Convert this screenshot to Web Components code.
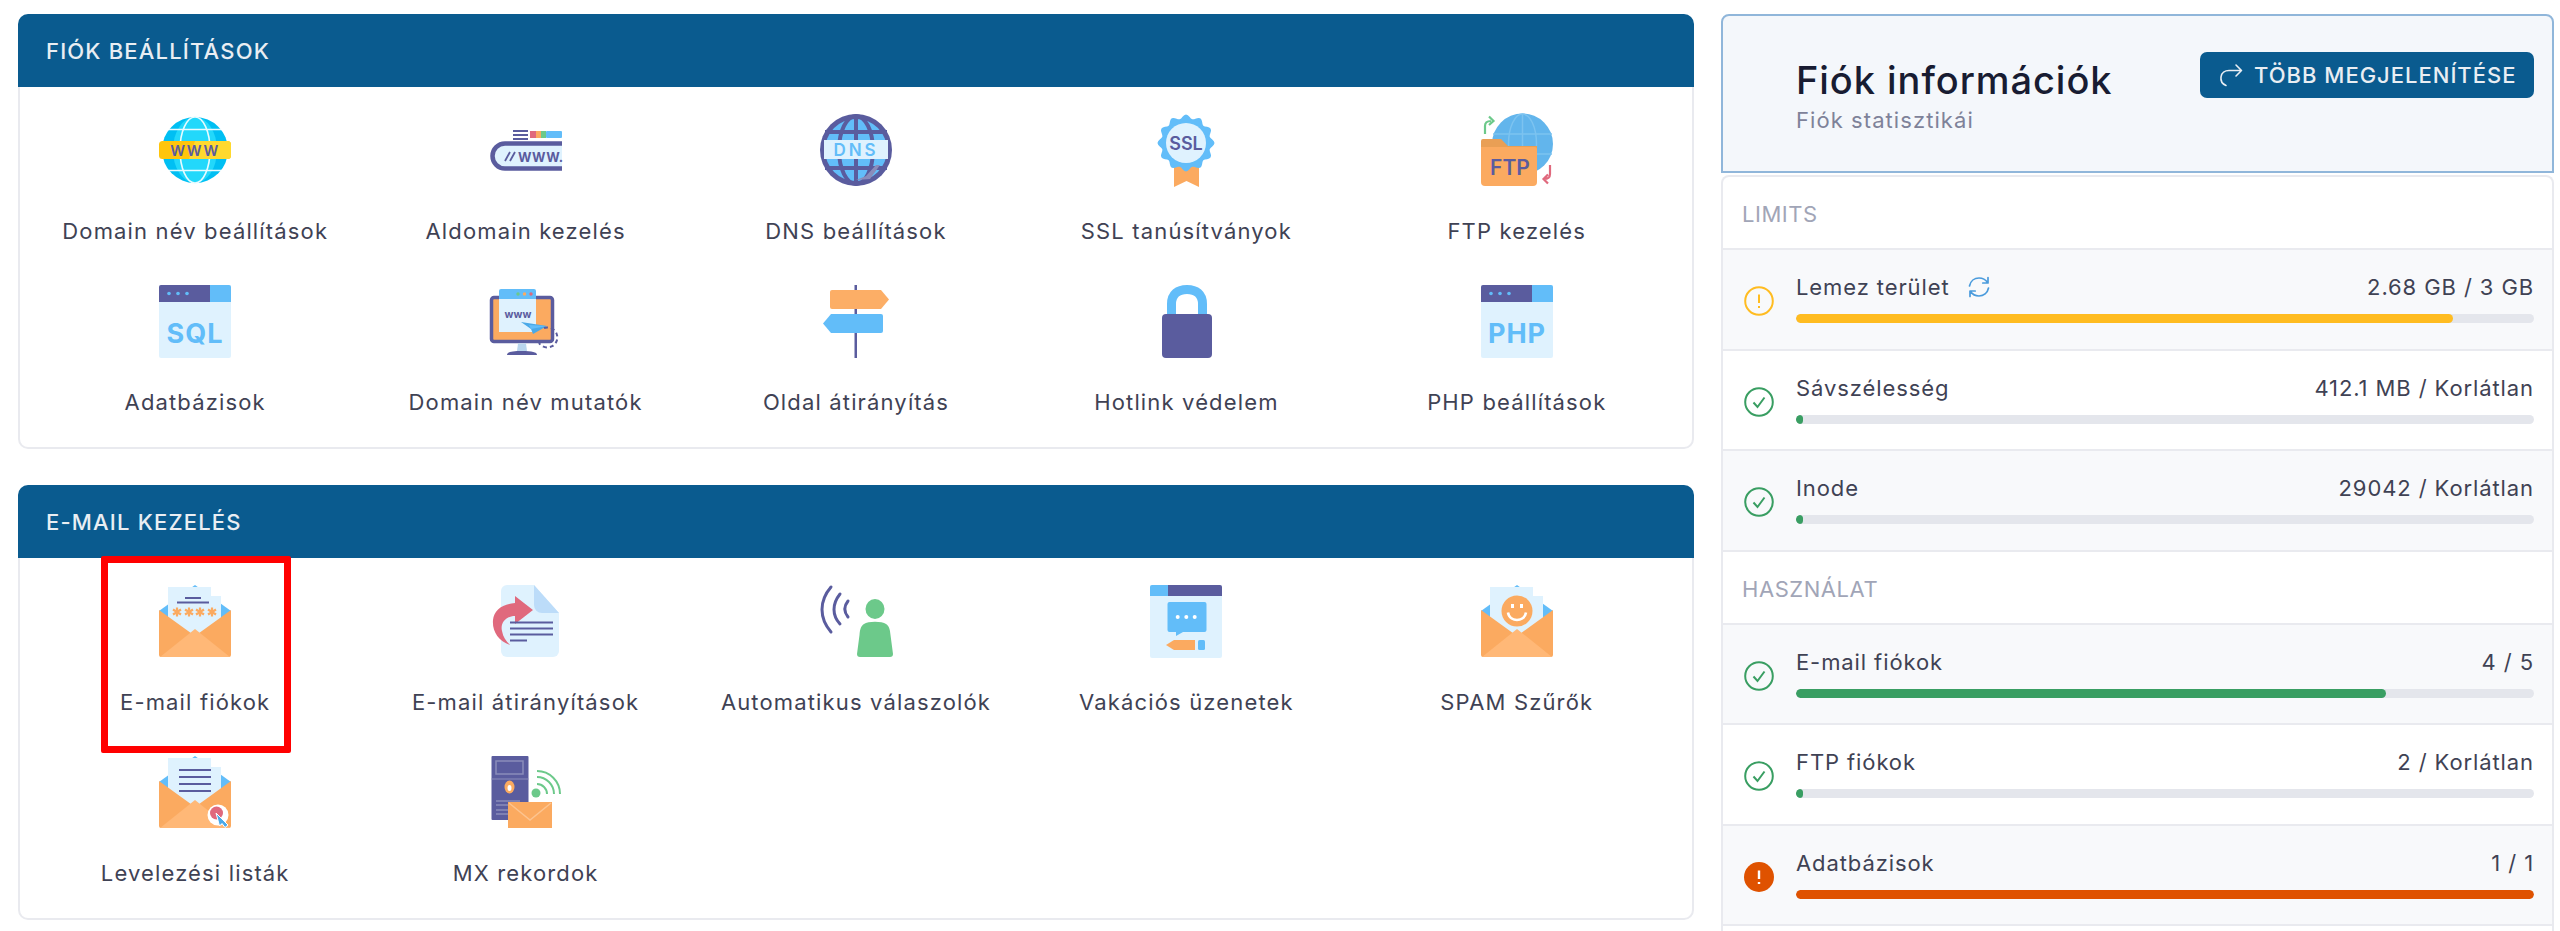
<!DOCTYPE html>
<html lang="hu">
  <head>
    <meta charset="utf-8" />
    <style>
      html, body { margin: 0; height: 931px; overflow: hidden; background: #fff; }
      body { font-family: Inter, "Liberation Sans", sans-serif; color: #3f4254; }
    </style>
    <template id="page-tmpl">
      <style>
        :host { display: grid; grid-template-columns: 1676px 833px; column-gap: 27px; padding: 14px 6px 0 18px; align-items: start; }
        .left { display: flex; flex-direction: column; gap: 36px; }
      </style>
      <div class="left"><slot name="left"></slot></div>
      <div><slot name="right"></slot></div>
    </template>
    <template id="card-tmpl">
      <style>
        :host { display: block; }
        header { height: 73px; box-sizing: border-box; background: #0a5b8f; border-radius: 10px 10px 0 0; color: #e9eef3; font-size: 22px; font-weight: 500; letter-spacing: 1.18px; line-height: 74px; padding-left: 28px; text-transform: uppercase; }
        .body { display: grid; grid-template-columns: repeat(5, 1fr); padding: 0 10px 18px; border: 2px solid #e9eaef; border-top: 0; border-radius: 0 0 10px 10px; }
      </style>
      <header id="title"></header>
      <div class="body"><slot></slot></div>
    </template>
    <template id="tile-tmpl">
      <style>
        :host { display: flex; flex-direction: column; align-items: center; position: relative; padding: 27px 0 12px; }
        svg { display: block; width: 72px; height: 72px; overflow: visible; font-family: Inter, "Liberation Sans", sans-serif; }
        .label { margin-top: 30px; font-size: 22px; line-height: 30px; letter-spacing: 1.15px; color: #3f4254; white-space: nowrap; }
        .mark { display: none; position: absolute; left: 71px; top: -2px; width: 190px; height: 197px; box-sizing: border-box; border: 7px solid #ff0000; border-radius: 2px; }
        :host([marked]) .mark { display: block; }
      </style>
      <div id="icon"></div>
      <div class="label"><slot></slot></div>
      <div class="mark"></div>
    </template>
    <template id="info-tmpl">
      <style>
        :host { display: flex; justify-content: space-between; align-items: flex-start; box-sizing: border-box; height: 159px; background: #f4f7fb; border: 2px solid #90b6da; border-radius: 8px 8px 0 0; padding: 36px 18px 0 73px; }
        h2 { margin: 0; font-size: 38px; line-height: 56px; font-weight: 500; color: #181c32; letter-spacing: .95px; }
        p { margin: -3px 0 0; font-size: 22px; line-height: 30px; letter-spacing: 1.07px; color: #7e8299; }
        button { display: flex; align-items: center; gap: 11px; width: 334px; height: 46px; box-sizing: border-box; padding: 0 0 0 19px; border: 0; border-radius: 7px; background: #0a5b8f; color: #e9eef3; font: 500 22px Inter, "Liberation Sans", sans-serif; letter-spacing: 1px; white-space: nowrap; }
        svg { width: 24px; height: 24px; flex: none; }
      </style>
      <div>
        <h2><slot name="title"></slot></h2>
        <p><slot name="sub"></slot></p>
      </div>
      <button>
        <svg viewBox="0 0 24 24" fill="none" stroke="#e9eef3" stroke-width="1.6" stroke-linecap="round" stroke-linejoin="round"><path d="M7 22.500C3.500 21 1.500 17.500 2 14 2.500 10 6 7.500 10 7.500H22.500M17 2L22.500 7.500 17 13"/></svg>
        <slot name="action"></slot>
      </button>
    </template>
    <template id="list-tmpl">
      <style>
        :host { display: block; margin-top: 2px; border: 2px solid #e9eaef; border-bottom: 0; border-radius: 8px 8px 0 0; padding-bottom: 8px; }
      </style>
      <slot></slot>
    </template>
    <template id="heading-tmpl">
      <style>
        :host { display: block; height: 71px; box-sizing: content-box; border-bottom: 2px solid #e9eaef; color: #a1a5b7; font-size: 22px; line-height: 74px; letter-spacing: .55px; padding-left: 19px; }
      </style>
      <slot></slot>
    </template>
    <template id="stat-tmpl">
      <style>
        :host { display: grid; grid-template-columns: 73px 1fr; box-sizing: border-box; height: 100.5px; border-bottom: 2px solid #e9eaef; padding: 23px 18px 0 0; }
        :host([shade]) { background: #f8f9fb; }
        .status { display: flex; justify-content: center; padding: 13px 2px 0 0; }
        .status svg { display: block; width: 30px; height: 30px; }
        .line { display: flex; justify-content: space-between; font-size: 22px; line-height: 28px; letter-spacing: .9px; color: #3f4254; white-space: nowrap; }
        .bar { height: 9px; margin-top: 13px; border-radius: 5px; background: #e4e6ec; overflow: hidden; }
        .fill { height: 100%; border-radius: 5px; }
      </style>
      <div class="status" id="status"></div>
      <div>
        <div class="line"><span><slot></slot></span><span id="value"></span></div>
        <div class="bar"><div class="fill" id="fill"></div></div>
      </div>
    </template>
  </head>
  <body>
    <dash-page>
      <panel-card slot="left" title="Fiók beállítások">
        <tile-item icon="globe">Domain név beállítások</tile-item>
        <tile-item icon="subdomain">Aldomain kezelés</tile-item>
        <tile-item icon="dns">DNS beállítások</tile-item>
        <tile-item icon="ssl">SSL tanúsítványok</tile-item>
        <tile-item icon="ftp">FTP kezelés</tile-item>
        <tile-item icon="sql">Adatbázisok</tile-item>
        <tile-item icon="pointer">Domain név mutatók</tile-item>
        <tile-item icon="sign">Oldal átirányítás</tile-item>
        <tile-item icon="lock">Hotlink védelem</tile-item>
        <tile-item icon="php">PHP beállítások</tile-item>
      </panel-card>
      <panel-card slot="left" title="E-mail kezelés">
        <tile-item icon="mailacc" marked>E-mail fiókok</tile-item>
        <tile-item icon="forward">E-mail átirányítások</tile-item>
        <tile-item icon="auto">Automatikus válaszolók</tile-item>
        <tile-item icon="vacation">Vakációs üzenetek</tile-item>
        <tile-item icon="spam">SPAM Szűrők</tile-item>
        <tile-item icon="lists">Levelezési listák</tile-item>
        <tile-item icon="mx">MX rekordok</tile-item>
      </panel-card>
      <div slot="right">
        <info-header>
          <span slot="title">Fiók információk</span>
          <span slot="sub">Fiók statisztikái</span>
          <span slot="action">TÖBB MEGJELENÍTÉSE</span>
        </info-header>
        <stat-list>
          <stat-heading>LIMITS</stat-heading>
          <stat-row status="warn" pct="89" value="2.68 GB / 3 GB" shade>Lemez terület <refresh-icon></refresh-icon></stat-row>
          <stat-row status="ok" pct="1" value="412.1 MB / Korlátlan">Sávszélesség</stat-row>
          <stat-row status="ok" pct="1" value="29042 / Korlátlan" shade>Inode</stat-row>
          <stat-heading>HASZNÁLAT</stat-heading>
          <stat-row status="ok" pct="80" value="4 / 5" shade>E-mail fiókok</stat-row>
          <stat-row status="ok" pct="1" value="2 / Korlátlan">FTP fiókok</stat-row>
          <stat-row status="full" pct="100" value="1 / 1" shade>Adatbázisok</stat-row>
        </stat-list>
      </div>
    </dash-page>

    <script type="text/javascript">
      const NAVY = '#5a5c9e', BLUE = '#62bdf9', PALE = '#dff2fe', ORANGE = '#fbaa60', LIGHT = '#ffb877', GREEN = '#6cc98a', RED = '#e0697d';

      function svg(inner) {
        return `<svg viewBox="0 0 72 72">${inner}</svg>`;
      }

      function windowIcon(word) {
        return svg(`
          <rect y="0" width="72" height="73" rx="2" fill="${PALE}"/>
          <path d="M2 0H51V17H0V2a2 2 0 0 1 2-2z" fill="${NAVY}"/>
          <path d="M51 0H70a2 2 0 0 1 2 2V17H51z" fill="${BLUE}"/>
          <circle cx="10" cy="8.500" r="1.800" fill="${BLUE}"/><circle cx="19" cy="8.500" r="1.800" fill="${BLUE}"/><circle cx="28" cy="8.500" r="1.800" fill="${BLUE}"/>
          <text x="36" y="58" text-anchor="middle" font-size="27" font-weight="700" letter-spacing="1" fill="${BLUE}">${word}</text>`);
      }

      // envelope shared by the mail icons, contents go between back and front
      function envelope(contents) {
        return svg(`
          <path d="M0 26L36 0 72 26V40H0z" fill="${BLUE}"/>
          <path d="M9 2H52V11H62V36L36 52 9 36z" fill="${PALE}"/>
          ${contents}
          <path d="M0 25L36 51 72 25V70a2 2 0 0 1-2 2H2a2 2 0 0 1-2-2z" fill="${ORANGE}"/>
          <path d="M36 44L71 72H1z" fill="${LIGHT}"/>`);
      }

      const star = (x) => `<path d="M${x} 22.500V31.500M${x - 4} 24.500L${x + 4} 29.500M${x + 4} 24.500L${x - 4} 29.500" stroke="${ORANGE}" stroke-width="2.200"/>`;

      // wavy edge of the certificate seal
      function sealPath() {
        let d = '';
        for (let i = 0; i < 96; i++) {
          const a = (i / 96) * Math.PI * 2;
          const r = 26.5 + 2 * Math.cos(a * 12);
          const x = (36 + r * Math.sin(a)).toFixed(2);
          const y = (29 - r * Math.cos(a)).toFixed(2);
          d += (i ? 'L' : 'M') + x + ' ' + y;
        }
        return d + 'z';
      }

      const ICONS = {
        globe: svg(`
          <circle cx="36" cy="36" r="33" fill="#00bff3"/>
          <ellipse cx="36" cy="36" rx="22" ry="33" fill="#22d8fb"/>
          <g fill="none" stroke="#e8fbff" stroke-width="1.600">
            <ellipse cx="36" cy="36" rx="15" ry="33"/>
            <path d="M10 15.500H62M10 56.500H62"/>
          </g>
          <rect x="0" y="27" width="72" height="18" rx="3.500" fill="#ffc50c"/>
          <path d="M36 27H68.500a3.500 3.500 0 0 1 3.500 3.500V41.500a3.500 3.500 0 0 1-3.500 3.500H30z" fill="#ffd92e"/>
          <text x="36" y="41.500" text-anchor="middle" font-size="14.500" font-weight="600" letter-spacing="1.500" fill="${NAVY}">WWW</text>`),

        subdomain: svg(`
          <path d="M23 17h15M23 21h15M23 25h15" stroke="${NAVY}" stroke-width="2"/>
          <rect x="40" y="17" width="6" height="7" fill="${RED}"/><rect x="46" y="17" width="5" height="7" fill="${ORANGE}"/><rect x="51" y="17" width="5" height="7" fill="${GREEN}"/><rect x="56" y="17" width="16" height="7" rx="1" fill="${BLUE}"/>
          <path d="M72 29.500H15A12.500 12.500 0 0 0 15 54.500H72" fill="${PALE}" stroke="${NAVY}" stroke-width="4.500"/>
          <path d="M15 47L20 38M20 47L25 38" stroke="${NAVY}" stroke-width="1.800"/>
          <text x="28" y="47.500" font-size="13" font-weight="700" letter-spacing=".3" fill="${NAVY}">WWW.</text>`),

        dns: svg(`
          <circle cx="36" cy="36" r="36" fill="${NAVY}"/>
          <circle cx="36" cy="36" r="31" fill="${BLUE}"/>
          <g fill="none" stroke="${NAVY}" stroke-width="4">
            <ellipse cx="36" cy="36" rx="17" ry="34"/>
            <path d="M36 2V70M5 18H67M5 54H67"/>
          </g>
          <rect x="4" y="26" width="64" height="19" fill="${PALE}"/>
          <text x="36" y="42" text-anchor="middle" font-size="17" font-weight="600" letter-spacing="3" fill="${BLUE}">DNS</text>
          <path d="M36 66L46 62 56 51 60 51 50 65z" fill="#8a8cba"/>`),

        ssl: svg(`
          <path d="M24 50H49V73L36.500 67 24 73z" fill="${ORANGE}"/>
          <path d="${sealPath()}" fill="${BLUE}"/>
          <circle cx="36" cy="29" r="20" fill="${PALE}"/>
          <text x="36" y="36" text-anchor="middle" font-size="18" font-weight="600" fill="${NAVY}">SSL</text>`),

        ftp: svg(`
          <circle cx="41.500" cy="30" r="30.500" fill="#62b5ec"/>
          <g fill="none" stroke="#7cc3f0" stroke-width="1.500"><ellipse cx="41.500" cy="30" rx="14" ry="30"/><path d="M41.500 0V60M12 20H71M12 40H71"/></g>
          <path d="M0 27a2 2 0 0 1 2-2H20L27 32H56V40H0z" fill="#e99f55"/>
          <path d="M0 33H54a2 2 0 0 1 2 2V68a4 4 0 0 1-4 4H4a4 4 0 0 1-4-4z" fill="${ORANGE}"/>
          <text x="29" y="61" text-anchor="middle" font-size="21" font-weight="600" fill="${NAVY}">FTP</text>
          <path d="M4 20V12C4 8 6 7 10 7M8 2.500L12.500 7 8 11" fill="none" stroke="${GREEN}" stroke-width="2.200"/>
          <path d="M69 51V60C69 64 67 65 63 65M67 60.500L62.500 65 67 69.500" fill="none" stroke="${RED}" stroke-width="2.200"/>`),

        sql: windowIcon('SQL'),
        php: windowIcon('PHP'),

        pointer: svg(`
          <rect x="1.500" y="12.500" width="61" height="44" rx="2.500" fill="${ORANGE}" stroke="${NAVY}" stroke-width="3.500"/>
          <path d="M28 58.500H36L37 66H27z" fill="#b9d6ee"/>
          <path d="M17 70C17 67 22 66 32 66S47 67 47 70z" fill="${NAVY}"/>
          <rect x="9" y="14" width="37" height="33" fill="${PALE}"/>
          <path d="M11 4H44a2 2 0 0 1 2 2V14H9V6a2 2 0 0 1 2-2z" fill="${BLUE}"/>
          <circle cx="28" cy="9" r="1.700" fill="${GREEN}"/><circle cx="34.500" cy="9" r="1.700" fill="${ORANGE}"/><circle cx="41" cy="9" r="1.700" fill="${RED}"/>
          <text x="28" y="33" text-anchor="middle" font-size="10.500" font-weight="700" fill="${NAVY}">www</text>
          <path d="M31 37L57 41 43 49 41 44z" fill="#4aa9e8"/><path d="M41 44L57 41 39 40z" fill="${BLUE}"/>
          <path d="M54 43A10 10 0 1 1 49 58" fill="none" stroke="${NAVY}" stroke-width="2" stroke-dasharray="4 3"/>`),

        sign: svg(`
          <rect x="34.500" y="0" width="2.500" height="73" fill="${NAVY}"/>
          <path d="M12 5H61L69 14.500 61 24H12a2 2 0 0 1-2-2V7a2 2 0 0 1 2-2z" fill="#fcae66"/>
          <path d="M61 29a2 2 0 0 1 2 2V46a2 2 0 0 1-2 2H11L3 38.500 11 29z" fill="${BLUE}"/>`),

        lock: svg(`
          <path d="M21.500 32V19C21.500 9 28 4.500 37 4.500S52.500 9 52.500 19V32" fill="none" stroke="${BLUE}" stroke-width="9"/>
          <rect x="12" y="29" width="50" height="44" rx="4" fill="${NAVY}"/>`),

        mailacc: envelope(`
          <path d="M26 13H42M18 17.500H50" stroke="${NAVY}" stroke-width="2"/>
          ${star(18)}${star(30)}${star(41)}${star(53)}`),

        spam: envelope(`
          <circle cx="36" cy="26" r="15.500" fill="${ORANGE}"/>
          <rect x="30" y="19" width="3" height="4" fill="#fff"/><rect x="39" y="19" width="3" height="4" fill="#fff"/>
          <path d="M27 27.500C28 33.500 33 35 36 35S44 33.500 45 27.500" fill="none" stroke="#fff" stroke-width="2.600"/>`),

        lists: envelope(`<path d="M20 14H52M20 21H52M20 28H52M20 35H52" stroke="${NAVY}" stroke-width="2"/>`).replace('</svg>', `
          <circle cx="59" cy="59" r="10.500" fill="#fff"/>
          <circle cx="57.500" cy="57" r="6.500" fill="${RED}"/>
          <path d="M57 57L69 69 66 71.500 63 67.500 60.500 70z" fill="#4aa9e8" stroke="#fff" stroke-width="1"/></svg>`),

        forward: svg(`
          <path d="M17 0H44L69 28V66a6 6 0 0 1-6 6H17a6 6 0 0 1-6-6V6a6 6 0 0 1 6-6z" fill="${PALE}"/>
          <path d="M44 0L69 28H52a8 8 0 0 1-8-8z" fill="#bcdcf9"/>
          <path d="M20 60C8 56 2 46 3 35 4 25 12 19 25 18V11L43 25 25 39V31C16 31 10 38 12 46 13 52 16 56 20 60z" fill="${RED}"/>
          <path d="M20 37.500H63M20 43.500H63M20 49.500H63M20 55.500H37" stroke="${NAVY}" stroke-width="2.200"/>`),

        auto: svg(`
          <g fill="none" stroke="${NAVY}" stroke-width="3" stroke-linecap="round">
            <path d="M11 2C-1 16-1 33 11 47"/>
            <path d="M20 9C12 19 12 30 20 39"/>
            <path d="M28 16C24 21 24 27 28 32"/>
          </g>
          <ellipse cx="55" cy="24" rx="9.500" ry="10" fill="${GREEN}"/>
          <path d="M44 39C48 36 62 36 66 39 69 41 70 44 70.500 50L73 69a3 3 0 0 1-3 3H40a3 3 0 0 1-3-3L39.500 50C40 44 41 41 44 39z" fill="${GREEN}"/>`),

        vacation: svg(`
          <rect width="72" height="73" rx="2" fill="${PALE}"/>
          <path d="M2 0H18V11H0V2a2 2 0 0 1 2-2z" fill="${BLUE}"/>
          <path d="M18 0H70a2 2 0 0 1 2 2V11H18z" fill="${NAVY}"/>
          <path d="M19.500 17H54.500a2 2 0 0 1 2 2V45a2 2 0 0 1-2 2H33L26 51V47H19.500a2 2 0 0 1-2-2V19a2 2 0 0 1 2-2z" fill="${BLUE}"/>
          <circle cx="27.700" cy="32" r="2" fill="#fff"/><circle cx="36.300" cy="32" r="2" fill="#fff"/><circle cx="44.700" cy="32" r="2" fill="#fff"/>
          <path d="M24 55H45V65H24L16 60z" fill="${ORANGE}"/>
          <rect x="48" y="55" width="7" height="10" rx="1.500" fill="${BLUE}"/>`),

        mx: svg(`
          <path d="M47 28A10 10 0 0 1 57 38M47 21A17 17 0 0 1 64 38M47 15A23 23 0 0 1 70 38" fill="none" stroke="${GREEN}" stroke-width="2"/>
          <circle cx="46" cy="37" r="4.500" fill="${GREEN}"/>
          <rect x="1.500" y="0" width="37" height="64" rx="1" fill="${NAVY}"/>
          <rect x="6" y="5" width="27" height="13" fill="none" stroke="#8a8cba" stroke-width="1.500"/>
          <path d="M1.500 23H38.500" stroke="#8a8cba" stroke-width="1"/>
          <ellipse cx="19.500" cy="31" rx="5" ry="6.500" fill="${ORANGE}"/><ellipse cx="19.500" cy="32" rx="2" ry="3" fill="#fff"/>
          <path d="M6 45H30M6 49H24M6 54H24M6 58H24" stroke="#8a8cba" stroke-width="1.500"/>
          <rect x="18" y="46" width="44" height="26" fill="${ORANGE}"/>
          <path d="M19 47L40 64 61 47" fill="none" stroke="#fdc48f" stroke-width="1.500"/>`),
      };

      const STATUS = {
        warn: ['#ffbc21', `<circle cx="15" cy="15" r="13.800" fill="none" stroke="#ffbc21" stroke-width="2"/><path d="M15 8.500V17M15 20V22" stroke="#ffbc21" stroke-width="2"/>`],
        ok: ['#399e62', `<circle cx="15" cy="15" r="13.800" fill="none" stroke="#399e62" stroke-width="2"/><path d="M9.500 15.500L13.500 20 20.500 10.500" fill="none" stroke="#399e62" stroke-width="2"/>`],
        full: ['#df5200', `<circle cx="15" cy="15" r="15" fill="#df5200"/><path d="M15 8.500V17M15 20V22" stroke="#fff" stroke-width="2.400"/>`],
      };

      // every element below just clones its template into an open shadow root
      class TemplateElement extends HTMLElement {
        constructor(templateId) {
          super();
          this.attachShadow({ mode: 'open' });
          this.shadowRoot.append(document.getElementById(templateId).content.cloneNode(true));
        }
      }

      class DashPage extends TemplateElement {
        constructor() { super('page-tmpl'); }
      }

      class PanelCard extends TemplateElement {
        constructor() { super('card-tmpl'); }
        connectedCallback() {
          this.shadowRoot.getElementById('title').textContent = this.getAttribute('title');
        }
      }

      class TileItem extends TemplateElement {
        constructor() { super('tile-tmpl'); }
        connectedCallback() {
          this.shadowRoot.getElementById('icon').innerHTML = ICONS[this.getAttribute('icon')];
        }
      }

      class InfoHeader extends TemplateElement {
        constructor() { super('info-tmpl'); }
      }

      class StatList extends TemplateElement {
        constructor() { super('list-tmpl'); }
      }

      class StatHeading extends TemplateElement {
        constructor() { super('heading-tmpl'); }
      }

      class StatRow extends TemplateElement {
        constructor() { super('stat-tmpl'); }
        connectedCallback() {
          const [color, inner] = STATUS[this.getAttribute('status')];
          const root = this.shadowRoot;
          root.getElementById('status').innerHTML = `<svg viewBox="0 0 30 30">${inner}</svg>`;
          root.getElementById('value').textContent = this.getAttribute('value');
          const fill = root.getElementById('fill');
          fill.style.background = color;
          fill.style.width = this.getAttribute('pct') + '%';
        }
      }

      class RefreshIcon extends HTMLElement {
        constructor() {
          super();
          this.attachShadow({ mode: 'open' });
          this.shadowRoot.innerHTML = `
            <style>:host { display: inline-block; width: 24px; height: 24px; margin-left: 10px; vertical-align: -4px; } svg { display: block; }</style>
            <svg viewBox="0 0 24 24" width="24" height="24" fill="none" stroke="#4a9bdc" stroke-width="1.700" stroke-linecap="round" stroke-linejoin="round">
              <path d="M2.500 11C3.500 6 7.500 3 12 3 15.500 3 18.500 4.500 20.500 7.500M21 2.500V8H15.800"/>
              <path d="M21.500 13C20.500 18 16.500 21 12 21 8.500 21 5.500 19.500 3.500 16.500M3 21.500V16H8.200"/>
            </svg>`;
        }
      }

      customElements.define('dash-page', DashPage);
      customElements.define('panel-card', PanelCard);
      customElements.define('tile-item', TileItem);
      customElements.define('info-header', InfoHeader);
      customElements.define('stat-list', StatList);
      customElements.define('stat-heading', StatHeading);
      customElements.define('stat-row', StatRow);
      customElements.define('refresh-icon', RefreshIcon);
    </script>
  </body>
</html>
